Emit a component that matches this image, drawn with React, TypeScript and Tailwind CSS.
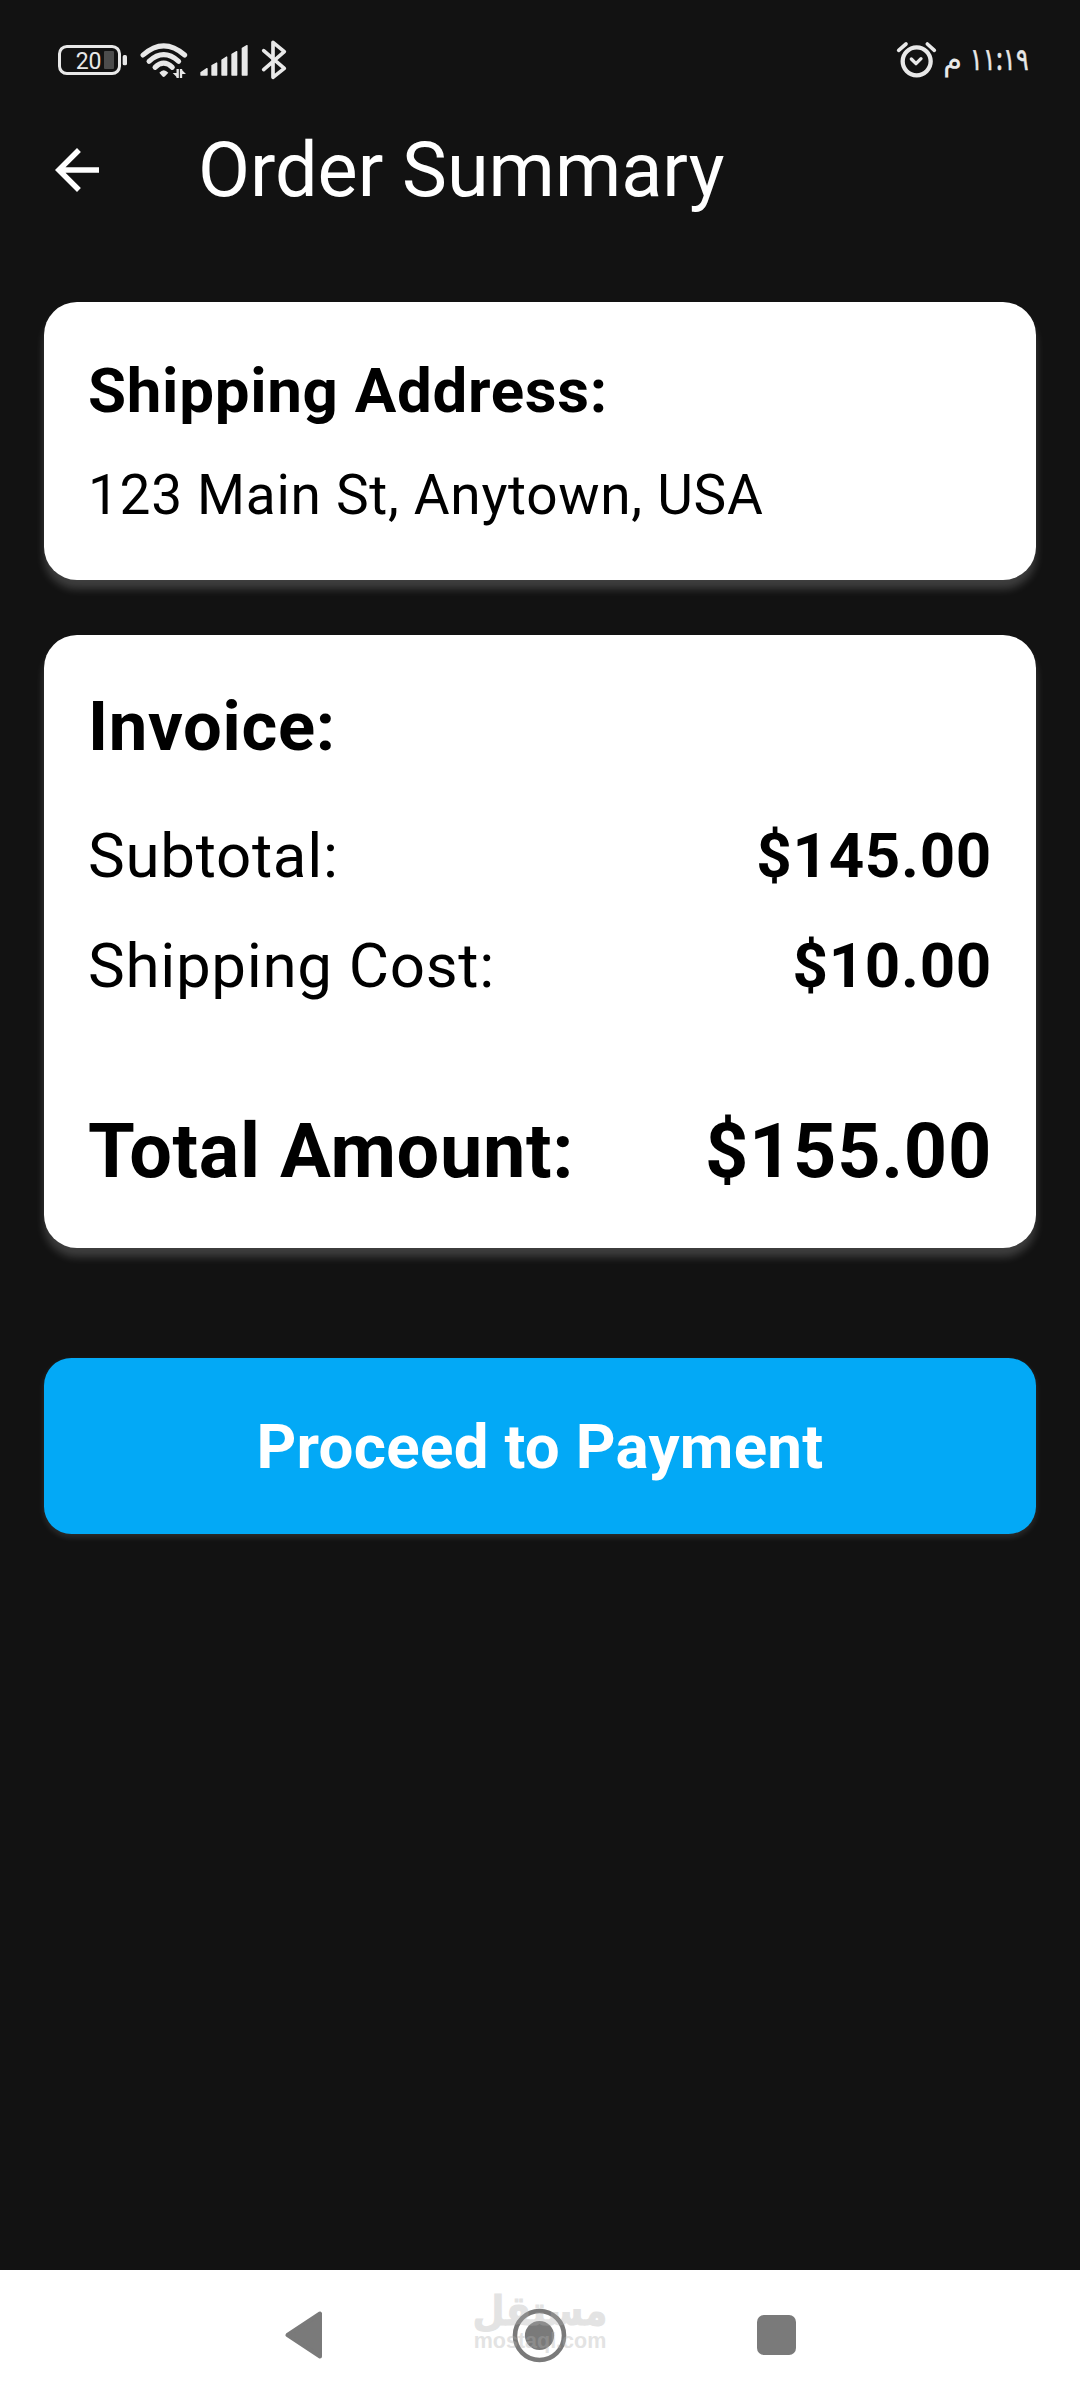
type Row = {
  label: string
  value: string
}

const invoiceRows: Row[] = [
  { label: 'Subtotal:', value: '$145.00' },
  { label: 'Shipping Cost:', value: '$10.00' },
]

function StatusBar() {
  return (
    <div className="flex h-[93px] shrink-0 items-start justify-between pt-5 pl-[58px] pr-[52px] text-[#e8e8e8]">
      <div className="flex gap-3">
        {/* Battery */}
        <svg className="h-[73px] w-[70px]" viewBox="54 0 210 219" fill="none">
          <rect x="58.5" y="79.5" width="180" height="81" rx="22" stroke="currentColor" strokeWidth="9" />
          <rect x="248" y="105" width="13" height="31" rx="5" fill="currentColor" />
          <rect x="192" y="93" width="30" height="54" rx="3" fill="#4c4c4c" />
          <text x="107" y="147" fontSize="69" fontWeight="400" fill="currentColor" style={{ fontFamily: 'Roboto, sans-serif' }}>20</text>
        </svg>

        {/* Wifi */}
        <svg className="h-[73px] w-12" viewBox="300 0 144 219" fill="none" stroke="currentColor">
          <path d="M309 105Q371 50 434 105" strokeWidth="15" strokeLinecap="round" />
          <path d="M327 124Q371 84 416 124" strokeWidth="15" strokeLinecap="round" />
          <path d="M345 142Q371 117 397 142" strokeWidth="15" strokeLinecap="round" />
          <path d="M358 158Q371 143 385 158L375 169Q371 173 367 169Z" fill="currentColor" stroke="none" />
          <path d="M410 150V173M424 173V150" stroke="#121212" strokeWidth="18" />
          <path d="M413 147V174M423 174V147" strokeWidth="7" />
          <path d="M413 174L398 159H413ZM423 147L438 162H423Z" fill="currentColor" stroke="none" />
        </svg>

        {/* Signal */}
        <svg className="h-[73px] w-12" viewBox="480 0 144 219" fill="currentColor" stroke="currentColor" strokeWidth="4" strokeLinejoin="round">
          <path d="M483 158L501 146V165H483Z" />
          <path d="M516 137L530 129V165H516Z" />
          <path d="M546 120L560 111V165H546Z" />
          <path d="M576 103L590 95V165H576Z" />
          <path d="M607 85L621 77V165H607Z" />
        </svg>

        {/* Bluetooth */}
        <svg className="h-[73px] w-7" viewBox="660 0 84 219" fill="none" stroke="currentColor" strokeWidth="11" strokeLinecap="round" strokeLinejoin="round">
          <path d="M671 92L733 145L699 172V67L733 95L671 149" />
        </svg>
      </div>

      <div className="flex">
        {/* Alarm */}
        <svg className="h-[73px] w-[41px]" viewBox="108 0 123 219" fill="none" stroke="currentColor" strokeLinecap="round" strokeLinejoin="round">
          <circle cx="170" cy="124" r="42" strokeWidth="13" />
          <path d="M154 117L168 131L183 116" strokeWidth="10" />
          <path d="M116 91L138 72M202 72L223 91" strokeWidth="11" />
        </svg>
        <div className="flex pt-[17px] font-['Noto_Sans',sans-serif] text-[31px] leading-[42px]">
          <span className="ml-[7px] flex w-[17px] justify-center">م</span>
          <span className="ml-[11px] flex w-14 justify-end">
            <span className="origin-right scale-x-[0.76] font-medium [-webkit-text-stroke:0.5px_#e8e8e8]">١١:١٩</span>
          </span>
        </div>
      </div>
    </div>
  )
}

function NavBar() {
  return (
    <div className="relative flex h-[130px] shrink-0 items-center bg-white pl-[285px] text-[#7a7a7a]">
      <svg className="h-[54px] w-[38px]" viewBox="0 0 38 54" fill="currentColor" stroke="currentColor" strokeWidth="4" strokeLinejoin="round">
        <path d="M2.5 27L35 5.5V48.5Z" />
      </svg>
      <svg className="ml-[189px] h-[55px] w-[55px]" viewBox="0 0 55 55" fill="none">
        <circle cx="27.5" cy="27.5" r="24.5" stroke="currentColor" strokeWidth="4.6" />
        <circle cx="27.5" cy="27.5" r="14.6" fill="currentColor" />
      </svg>
      <div className="ml-[190px] h-10 w-[39px] rounded-[7px] bg-current" />

      {/* Watermark */}
      <div className="absolute left-[475px] top-[13px] flex w-[130px] flex-col items-center text-[#b0b0b0] opacity-35">
        <span dir="rtl" className="h-[46px] scale-x-[0.9] whitespace-nowrap font-['DejaVu_Sans',sans-serif] text-[41px] font-bold leading-[56px] [-webkit-text-stroke:1px_#b0b0b0]">مستقل</span>
        <span className="font-['Liberation_Sans',sans-serif] text-[21.5px] font-bold leading-6">mostaql.com</span>
      </div>
    </div>
  )
}

export default function App() {
  return (
    <div className="flex h-[2400px] w-[1080px] flex-col overflow-hidden bg-[#121212] font-[Roboto,sans-serif]">
      <StatusBar />

      {/* App bar */}
      <header className="flex h-[154px] shrink-0 items-center pl-11 text-white">
        <svg className="h-[66px] w-[66px]" viewBox="0 0 24 24" fill="currentColor">
          <path d="M20 11H7.83l5.59-5.59L12 4l-8 8 8 8 1.41-1.41L7.83 13H20v-2z" />
        </svg>
        <h1 className="ml-[88px] text-[75.625px] leading-[88px]">Order Summary</h1>
      </header>

      <main className="flex flex-1 flex-col px-11 pt-[55px] tracking-[0.6875px] text-black">
        {/* Shipping */}
        <section className="h-[277.5px] rounded-[33px] bg-white p-11 shadow-[0_9px_9px_rgba(255,255,255,0.19)]">
          <h2 className="text-[61.875px] font-bold leading-[90px]">Shipping Address:</h2>
          <p className="mt-5 text-[55px] leading-[78px]">123 Main St, Anytown, USA</p>
        </section>

        {/* Invoice */}
        <section className="mt-[55px] rounded-[33px] bg-white p-11 shadow-[0_9px_9px_rgba(255,255,255,0.19)]">
          <h2 className="text-[68.75px] font-bold leading-[96px]">Invoice:</h2>
          <div className="mt-[37px] flex flex-col gap-[22px]">
            {invoiceRows.map(row => (
              <div key={row.label} className="flex justify-between text-[61.875px] leading-[88.5px]">
                <span>{row.label}</span>
                <span className="font-bold">{row.value}</span>
              </div>
            ))}
          </div>
          <div className="mt-[87px] flex justify-between text-[75.625px] font-bold leading-[106px]">
            <span>Total Amount:</span>
            <span>$155.00</span>
          </div>
        </section>

        <button className="mt-[110px] h-[176px] rounded-[27.5px] bg-[#03a9f6] pt-1 text-[61.875px] font-bold tracking-[0.275px] text-white shadow-[0_3px_6px_rgba(255,255,255,0.12)]">
          Proceed to Payment
        </button>
      </main>

      <NavBar />
    </div>
  )
}
